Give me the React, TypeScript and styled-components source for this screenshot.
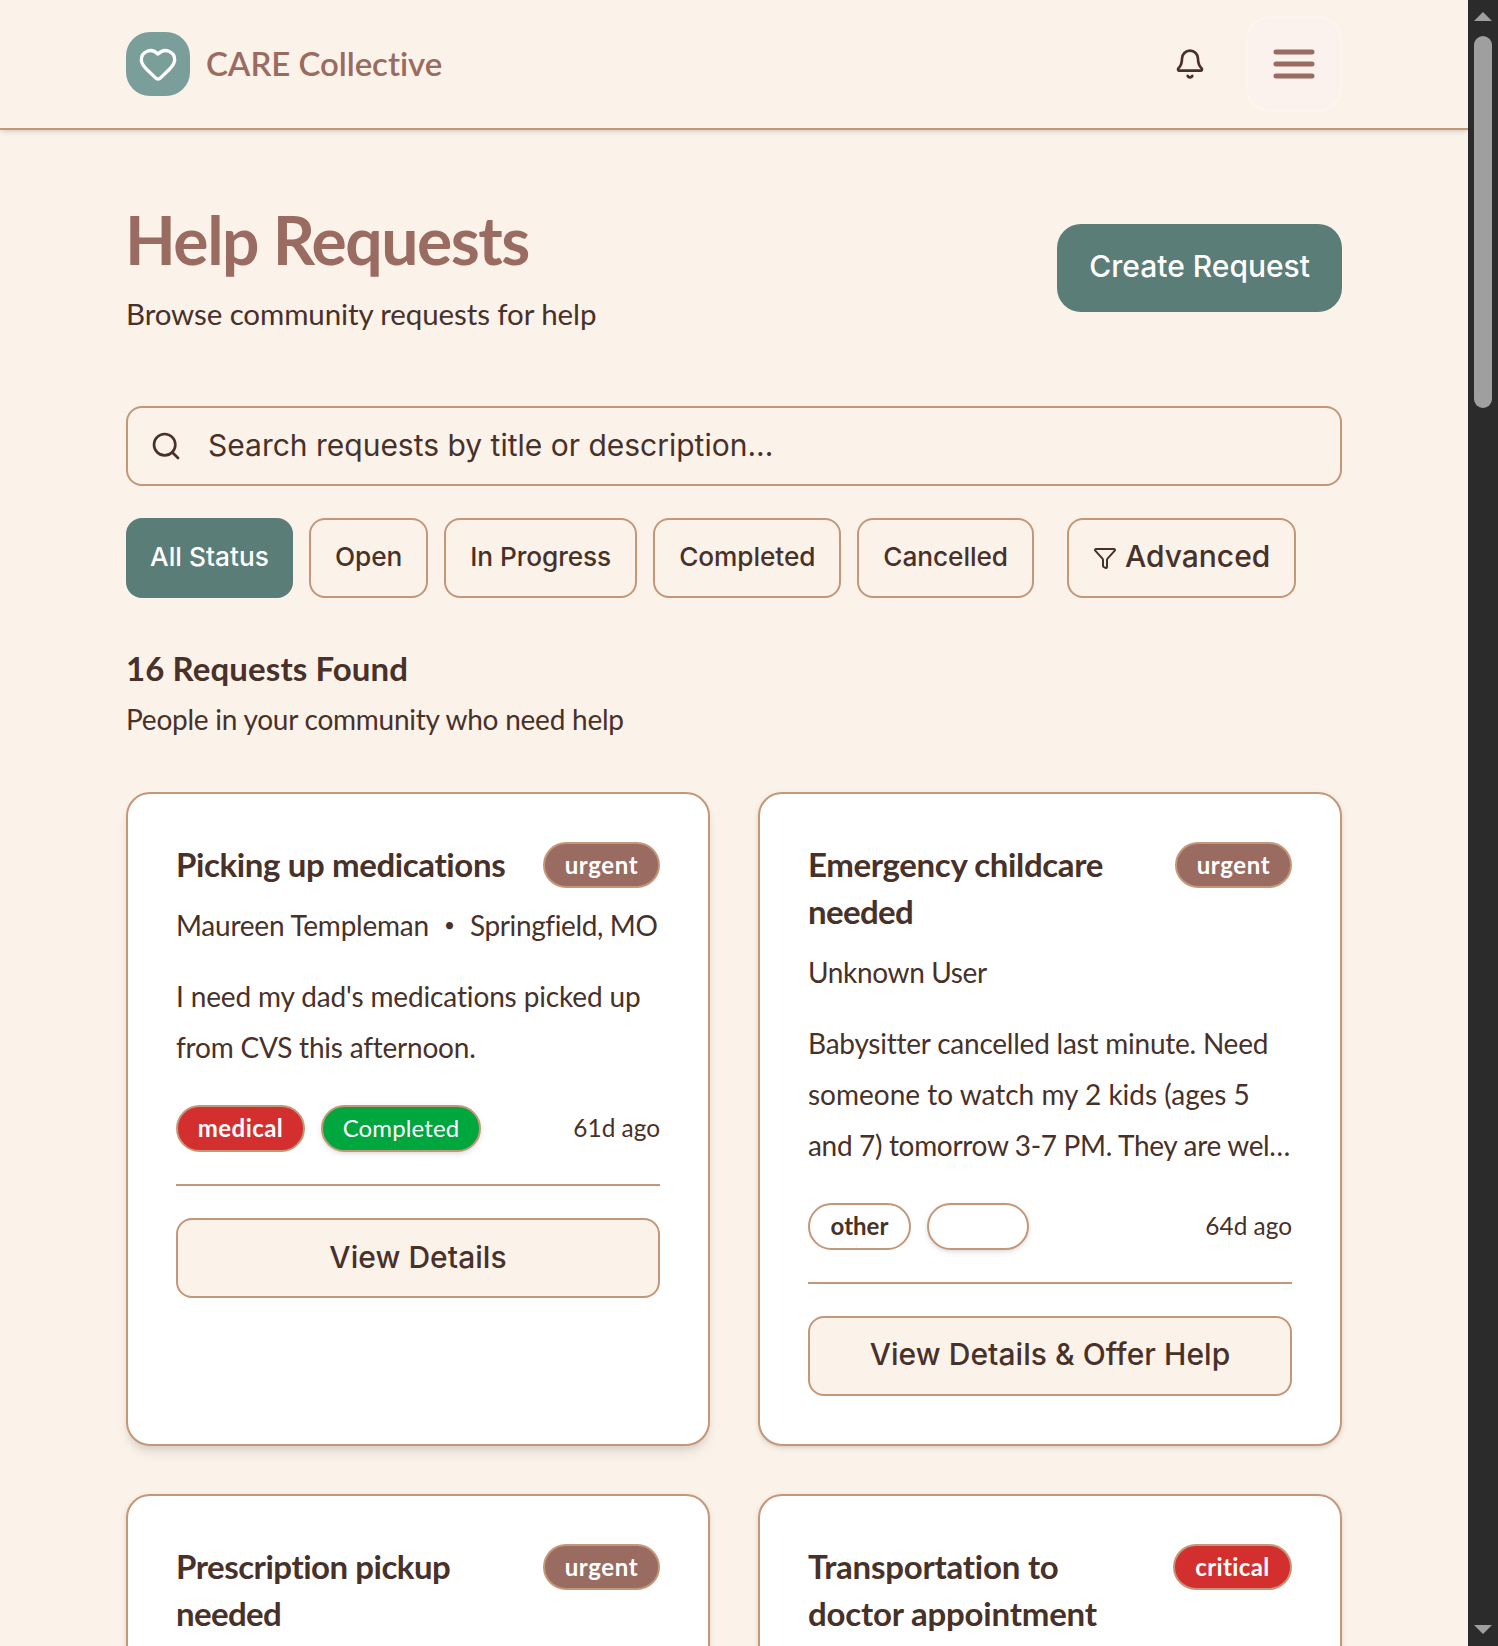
import React from 'react';
import styled, { createGlobalStyle } from 'styled-components';
import { Bell, Funnel, Heart, Search } from 'lucide-react';

const color = {
  cream: '#fbf2e9',
  brown: '#483129',
  rose: '#9a6b61',
  tan: '#c39778',
  teal: '#5a7d77',
  sage: '#7a9e99',
  red: '#d32f2f',
  green: '#00a63e',
};

const sans = `Inter, "Liberation Sans", sans-serif`;
const display = `Lato, "Open Sans", sans-serif`;
const shadowSm = '0 2px 6px 0 rgba(0,0,0,.1), 0 2px 4px -2px rgba(0,0,0,.1)';
const shadowMd = '0 8px 12px -2px rgba(0,0,0,.1), 0 4px 8px -4px rgba(0,0,0,.1)';

const GlobalStyle = createGlobalStyle`
  *, *::before, *::after { box-sizing: border-box; }
  html, body { margin: 0; padding: 0; overflow: hidden; background: ${color.cream}; }
  h1, h2, h3, p { margin: 0; }
  button { margin: 0; font: inherit; color: inherit; }
`;

const Window = styled.div`
  display: flex;
  height: 1646px;
  overflow: hidden;
  background: ${color.cream};
  color: ${color.brown};
  font-family: ${display};
`;

const Page = styled.div`
  flex: 1;
  min-width: 0;
  height: 100%;
  overflow: hidden;
`;

const Header = styled.header`
  display: flex;
  align-items: center;
  justify-content: space-between;
  height: 130px;
  padding: 0 126px;
  border-bottom: 2px solid ${color.tan};
  box-shadow: ${shadowSm};
`;

const Brand = styled.div`
  display: flex;
  align-items: center;
  gap: 16px;
`;

const Logo = styled.div`
  display: grid;
  place-items: center;
  width: 64px;
  height: 64px;
  border-radius: 24px;
  background: ${color.sage};
  color: #fff;
`;

const BrandName = styled.span`
  padding-bottom: 3px;
  font-size: 33px;
  font-weight: 600;
  letter-spacing: -0.06px;
  color: ${color.rose};
`;

const HeaderActions = styled.div`
  display: flex;
  align-items: center;
  gap: 40px;
`;

const IconButton = styled.button`
  display: grid;
  place-items: center;
  padding: 0;
  border: 0;
  background: none;
`;

const MenuButton = styled(IconButton)`
  width: 96px;
  height: 96px;
  border: 2px solid #fef5ef;
  border-radius: 24px;
  background: #fbf2ed;
  color: ${color.rose};
`;

const Main = styled.main`
  padding: 70px 126px 0;
`;

const Intro = styled.section`
  display: flex;
  align-items: center;
  justify-content: space-between;
  height: 137px;
`;

const PageTitle = styled.h1`
  margin-left: -1px;
  font-size: 66px;
  line-height: 80px;
  font-weight: 700;
  letter-spacing: -1.47px;
  color: ${color.rose};
`;

const Subtitle = styled.p`
  margin-top: 10px;
  font-size: 29.5px;
  line-height: 48px;
  letter-spacing: -0.1px;
`;

const CreateButton = styled.button`
  height: 88px;
  margin-bottom: 2px;
  padding: 0 32px 3px;
  border: 0;
  border-radius: 24px;
  background: ${color.teal};
  color: #fff;
  font-family: ${sans};
  font-size: 30px;
  font-weight: 500;
`;

const SearchBox = styled.div`
  display: flex;
  align-items: center;
  gap: 26px;
  height: 80px;
  margin-top: 69px;
  padding: 0 22px;
  border: 2px solid ${color.tan};
  border-radius: 16px;
  font-family: ${sans};
  font-size: 30px;
`;

const SearchText = styled.span`
  padding-bottom: 3px;
`;

const Filters = styled.div`
  display: flex;
  gap: 16px;
  margin-top: 32px;
`;

const FilterButton = styled.button<{ $active?: boolean }>`
  height: 80px;
  padding: 0 24px 3px;
  border: ${p => (p.$active ? '0' : `2px solid ${color.tan}`)};
  border-radius: 16px;
  background: ${p => (p.$active ? color.teal : 'transparent')};
  color: ${p => (p.$active ? '#fff' : color.brown)};
  font-family: ${sans};
  font-size: 26.25px;
  font-weight: 500;
  letter-spacing: ${p => (p.$active ? 0.04 : -0.09)}px;
`;

const AdvancedButton = styled(FilterButton)`
  display: flex;
  align-items: center;
  gap: 8px;
  margin-left: 17px;
  padding-bottom: 0;
  font-size: 30px;
  letter-spacing: 0;
`;

const AdvancedLabel = styled.span`
  padding-bottom: 4px;
`;

const Results = styled.section`
  margin-top: 46px;
`;

const ResultsTitle = styled.h2`
  font-size: 33px;
  line-height: 48px;
  font-weight: 700;
  letter-spacing: 0.1px;
`;

const ResultsNote = styled.p`
  margin-top: 3px;
  font-size: 28px;
  line-height: 48px;
  letter-spacing: -0.24px;
`;

const Grid = styled.div`
  display: grid;
  grid-template-columns: repeat(2, minmax(0, 1fr));
  grid-auto-rows: 654px;
  gap: 48px;
  margin-top: 49px;
`;

const Card = styled.article<{ $raised?: boolean }>`
  display: flex;
  flex-direction: column;
  padding: 48px;
  border: 2px solid ${color.tan};
  border-radius: 24px;
  background: #fff;
  box-shadow: ${p => (p.$raised ? shadowMd : shadowSm)};
`;

const Tag = styled.span<{ $bg?: string; $ink?: string; $weight?: number; $shadow?: boolean; $w: number }>`
  display: flex;
  align-items: center;
  justify-content: center;
  flex-shrink: 0;
  width: ${p => p.$w}px;
  height: 47px;
  padding-bottom: 2px;
  border: 2px solid ${color.tan};
  border-radius: 24px;
  background: ${p => p.$bg ?? '#fff'};
  color: ${p => p.$ink ?? '#fff'};
  font-size: 24px;
  font-weight: ${p => p.$weight ?? 700};
  box-shadow: ${p => (p.$shadow ? shadowSm : 'none')};
`;

const CardHead = styled.div`
  display: flex;
  align-items: flex-start;
  justify-content: space-between;

  ${Tag} {
    height: 46px;
    margin-bottom: -2px;
  }
`;

const CardTitle = styled.h3`
  margin-top: -1px;
  font-size: 33px;
  line-height: 46.9px;
  font-weight: 700;
`;

const Line = styled.span<{ $track?: number }>`
  display: block;
  white-space: nowrap;
  letter-spacing: ${p => p.$track ?? 0}px;
`;

const Meta = styled.div`
  display: flex;
  gap: 15px;
  margin-top: 14px;
  font-size: 28px;
  line-height: 46px;
`;

const Dot = styled.span`
  font-size: 19px;
`;

const Body = styled.p`
  margin-top: 23px;
  font-size: 28px;
  line-height: 51.1px;
`;

const Tags = styled.div`
  display: flex;
  align-items: center;
  gap: 16px;
  height: 47px;
  margin-top: 32px;
`;

const Age = styled.span`
  margin-left: auto;
  padding-bottom: 2px;
  font-size: 24.4px;
`;

const Divider = styled.hr`
  width: 100%;
  height: 2px;
  margin: 32px 0;
  border: 0;
  background: ${color.tan};
`;

const DetailsButton = styled.button<{ $lift?: number }>`
  height: 80px;
  padding: 0 0 ${p => p.$lift ?? 0}px;
  border: 2px solid ${color.tan};
  border-radius: 16px;
  background: ${color.cream};
  font-family: ${sans};
  font-size: 30px;
  font-weight: 500;
  letter-spacing: 0.05px;
`;

const Scrollbar = styled.div`
  display: flex;
  flex-direction: column;
  align-items: center;
  width: 30px;
  height: 100%;
  padding: 12px 0;
  background: #2b2b2b;
`;

const Arrow = styled.div<{ $down?: boolean }>`
  width: 18px;
  height: 9px;
  background: #9f9f9f;
  clip-path: ${p => (p.$down ? 'polygon(0 0, 100% 0, 50% 100%)' : 'polygon(50% 0, 100% 100%, 0 100%)')};
`;

const Thumb = styled.div`
  width: 18px;
  height: 372px;
  margin: 15px 0 auto;
  border-radius: 9px;
  background: #9f9f9f;
`;

const MenuIcon = () => (
  <svg width="48" height="48" viewBox="0 0 24 24" fill="none" stroke="currentColor" strokeWidth="2.5" strokeLinecap="round">
    <path d="M3 6h18M3 12h18M3 18h18" />
  </svg>
);

type TextLine = [text: string, track: number];
type TagInfo = { text: string; w: number; bg?: string; ink?: string; track?: number; weight?: number; shadow?: boolean };
type Request = {
  title: TextLine[];
  level: TagInfo;
  author?: TextLine;
  place?: TextLine;
  body?: TextLine[];
  tags?: TagInfo[];
  age?: string;
  action?: string;
  lift?: number;
  raised?: boolean;
};

const urgent: TagInfo = { text: 'urgent', w: 117, bg: color.rose, track: 0.6 };

const requests: Request[] = [
  {
    title: [['Picking up medications', -0.38]],
    level: urgent,
    author: ['Maureen Templeman', -0.23],
    place: ['Springfield, MO', -0.38],
    body: [["I need my dad's medications picked up", -0.14], ['from CVS this afternoon.', -0.22]],
    tags: [
      { text: 'medical', w: 129, bg: color.red, track: 0.44 },
      { text: 'Completed', w: 160, bg: color.green, track: 0.12, weight: 400, shadow: true },
    ],
    age: '61d ago',
    action: 'View Details',
    lift: 3,
    raised: true,
  },
  {
    title: [['Emergency childcare', -0.36], ['needed', -0.64]],
    level: urgent,
    author: ['Unknown User', -0.36],
    body: [
      ['Babysitter cancelled last minute. Need', -0.23],
      ['someone to watch my 2 kids (ages 5', 0],
      ['and 7) tomorrow 3-7 PM. They are wel…', -0.33],
    ],
    tags: [
      { text: 'other', w: 103, ink: color.brown },
      { text: '', w: 102, shadow: true },
    ],
    age: '64d ago',
    action: 'View Details & Offer Help',
    lift: 4,
  },
  { title: [['Prescription pickup', -0.48], ['needed', -0.64]], level: urgent },
  {
    title: [['Transportation to', -0.24], ['doctor appointment', -0.2]],
    level: { text: 'critical', w: 119, bg: color.red, track: 0.38 },
  },
];

const Pill = ({ tag }: { tag: TagInfo }) => (
  <Tag $w={tag.w} $bg={tag.bg} $ink={tag.ink} $weight={tag.weight} $shadow={tag.shadow}>
    <Line $track={tag.track}>{tag.text}</Line>
  </Tag>
);

const lines = (items: TextLine[]) =>
  items.map(([text, track]) => (
    <Line key={text} $track={track}>{text}</Line>
  ));

const RequestCard = ({ item }: { item: Request }) => (
  <Card $raised={item.raised}>
    <CardHead>
      <CardTitle>{lines(item.title)}</CardTitle>
      <Pill tag={item.level} />
    </CardHead>
    {item.author && (
      <Meta>
        {lines([item.author])}
        {item.place && <Dot>•</Dot>}
        {item.place && lines([item.place])}
      </Meta>
    )}
    {item.body && <Body>{lines(item.body)}</Body>}
    {item.tags && (
      <Tags>
        {item.tags.map((tag, i) => <Pill key={i} tag={tag} />)}
        <Age>{item.age}</Age>
      </Tags>
    )}
    {item.action && (
      <>
        <Divider />
        <DetailsButton $lift={item.lift}>{item.action}</DetailsButton>
      </>
    )}
  </Card>
);

export default function App() {
  return (
    <>
      <GlobalStyle />
      <Window>
        <Page>
          <Header>
            <Brand>
              <Logo><Heart size={40} /></Logo>
              <BrandName>CARE Collective</BrandName>
            </Brand>
            <HeaderActions>
              <IconButton aria-label="Notifications"><Bell size={32} /></IconButton>
              <MenuButton aria-label="Menu"><MenuIcon /></MenuButton>
            </HeaderActions>
          </Header>
          <Main>
            <Intro>
              <div>
                <PageTitle>Help Requests</PageTitle>
                <Subtitle>Browse community requests for help</Subtitle>
              </div>
              <CreateButton>Create Request</CreateButton>
            </Intro>
            <SearchBox>
              <Search size={32} />
              <SearchText>Search requests by title or description...</SearchText>
            </SearchBox>
            <Filters>
              <FilterButton $active>All Status</FilterButton>
              <FilterButton>Open</FilterButton>
              <FilterButton>In Progress</FilterButton>
              <FilterButton>Completed</FilterButton>
              <FilterButton>Cancelled</FilterButton>
              <AdvancedButton>
                <Funnel size={24} />
                <AdvancedLabel>Advanced</AdvancedLabel>
              </AdvancedButton>
            </Filters>
            <Results>
              <ResultsTitle>16 Requests Found</ResultsTitle>
              <ResultsNote>People in your community who need help</ResultsNote>
            </Results>
            <Grid>
              {requests.map((item, i) => <RequestCard key={i} item={item} />)}
            </Grid>
          </Main>
        </Page>
        <Scrollbar>
          <Arrow />
          <Thumb />
          <Arrow $down />
        </Scrollbar>
      </Window>
    </>
  );
}
